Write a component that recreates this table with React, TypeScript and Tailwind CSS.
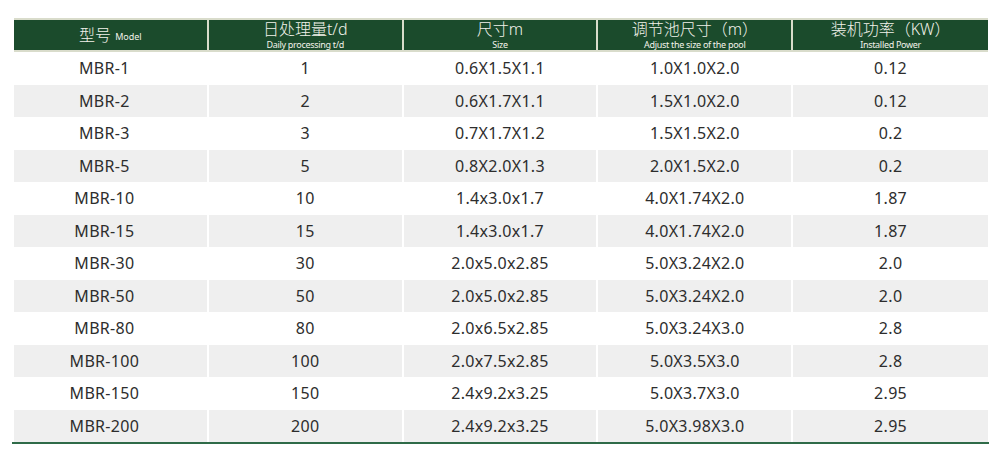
import React from "react";

const rows = [
  ["MBR-1", "1", "0.6X1.5X1.1", "1.0X1.0X2.0", "0.12"],
  ["MBR-2", "2", "0.6X1.7X1.1", "1.5X1.0X2.0", "0.12"],
  ["MBR-3", "3", "0.7X1.7X1.2", "1.5X1.5X2.0", "0.2"],
  ["MBR-5", "5", "0.8X2.0X1.3", "2.0X1.5X2.0", "0.2"],
  ["MBR-10", "10", "1.4x3.0x1.7", "4.0X1.74X2.0", "1.87"],
  ["MBR-15", "15", "1.4x3.0x1.7", "4.0X1.74X2.0", "1.87"],
  ["MBR-30", "30", "2.0x5.0x2.85", "5.0X3.24X2.0", "2.0"],
  ["MBR-50", "50", "2.0x5.0x2.85", "5.0X3.24X2.0", "2.0"],
  ["MBR-80", "80", "2.0x6.5x2.85", "5.0X3.24X3.0", "2.8"],
  ["MBR-100", "100", "2.0x7.5x2.85", "5.0X3.5X3.0", "2.8"],
  ["MBR-150", "150", "2.4x9.2x3.25", "5.0X3.7X3.0", "2.95"],
  ["MBR-200", "200", "2.4x9.2x3.25", "5.0X3.98X3.0", "2.95"],
];

const headers: [string, string][] = [
  ["日处理量t/d", "Daily processing t/d"],
  ["尺寸m", "Size"],
  ["调节池尺寸（m）", "Adjust the size of the pool"],
  ["装机功率（KW）", "Installed Power"],
];

export default function App() {
  return (
    <div
      className="w-[1000px] h-[453px] bg-white pt-[18px] pl-[14px]"
      style={{ fontFamily: '"Noto Sans", "Noto Sans CJK SC", sans-serif' }}
    >
      <div className="w-[974px]">
        <div className="grid grid-cols-5 h-[34px] bg-[#1b4b2c] border-y-2 border-[#d9dccb] text-[#f2f2ea]">
          <div className="flex items-center justify-center border-r-2 border-[#d9dccb]">
            <span className="text-[16px] leading-none font-light">型号</span>
            <span className="text-[9px] leading-none ml-1 mt-[3px]">Model</span>
          </div>
          {headers.map(([zh, en], i) => (
            <div
              key={i}
              className={`flex flex-col items-center justify-center gap-[3px] ${i < 3 ? "border-r-2 border-[#d9dccb]" : ""}`}
            >
              <span className="text-[16px] leading-[15px] font-light">{zh}</span>
              <span className="text-[9px] leading-[9px] tracking-[-0.3px]">{en}</span>
            </div>
          ))}
        </div>
        {rows.map((r, ri) => (
          <div
            key={ri}
            className={`grid grid-cols-5 h-[32.5px] text-[16px] tracking-[0.3px] text-[#2d2d2d] ${ri % 2 === 1 ? "bg-[#efefef]" : "bg-white"}`}
          >
            {r.map((c, ci) => (
              <div
                key={ci}
                className={`flex items-center justify-center ${ci < 4 ? "border-r-2 border-white" : ""} ${ci === 0 ? "pr-[12px]" : ""}`}
              >
                {c}
              </div>
            ))}
          </div>
        ))}
        <div className="h-[2px] w-[977px] -ml-[2px] bg-[#2f6b48]" />
      </div>
    </div>
  );
}
